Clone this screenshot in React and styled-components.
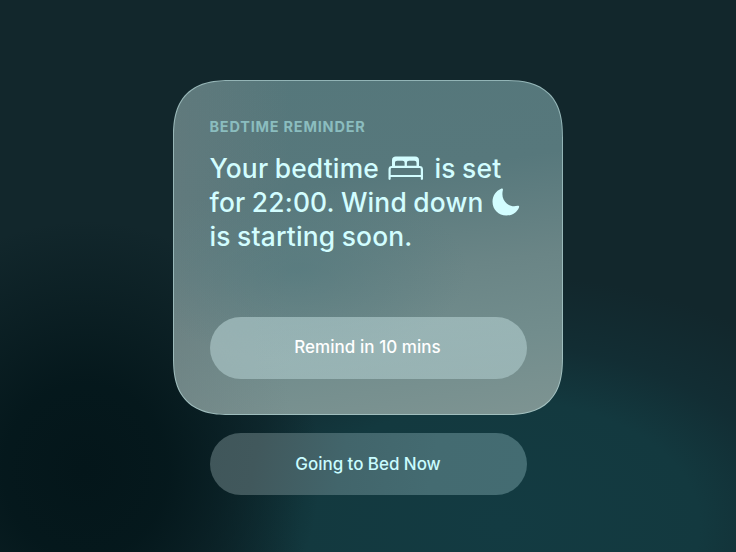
import React from "react";
import styled, { createGlobalStyle } from "styled-components";

const GlobalStyle = createGlobalStyle`
  *, *::before, *::after { box-sizing: border-box; }
  body { margin: 0; font-family: Inter, "Open Sans", sans-serif; -webkit-font-smoothing: antialiased; }
`;

const Scene = styled.main`
  width: 736px;
  height: 552px;
  overflow: hidden;
  display: flex;
  flex-direction: column;
  align-items: center;
  padding-top: 80px;
  gap: 18px;
  background:
    radial-gradient(ellipse 235px 250px at 85px 470px, #04161a 0%, rgba(4, 23, 27, 0.93) 35%, rgba(5, 24, 28, 0.45) 70%, rgba(6, 26, 30, 0) 100%),
    radial-gradient(ellipse 400px 250px at 500px 525px, #133b42 0%, #13393f 50%, rgba(18, 50, 57, 0.6) 72%, rgba(18, 40, 45, 0) 100%),
    #12272c;
`;

const Card = styled.section`
  width: 390px;
  height: 335px;
  display: flex;
  flex-direction: column;
  align-items: flex-start;
  padding: 37px 36px 35px 35.5px;
  border: 1px solid rgba(184, 218, 218, 0.62);
  border-radius: 54px;
  @supports (corner-shape: superellipse(1.38)) {
    border-radius: 58px;
    corner-shape: superellipse(1.38);
  }
  background:
    radial-gradient(ellipse 170px 90px at 125px 190px, rgba(82, 120, 125, 0.6), rgba(82, 120, 125, 0) 100%),
    linear-gradient(90deg, rgba(110, 125, 126, 0.45), rgba(110, 125, 126, 0) 30%),
    linear-gradient(172deg, #55777b 0%, #57787c 32%, #6a8586 58%, #728d8d 78%, #7e9492 100%);
  background-origin: border-box;
`;

const Eyebrow = styled.h2`
  margin: 0;
  font-size: 14.5px;
  line-height: 17px;
  font-weight: 700;
  letter-spacing: 0.77px;
  color: #8bbdbf;
`;

const Message = styled.p`
  margin: 16px 0 0;
  font-size: 26.4px;
  line-height: 34px;
  font-weight: 500;
  letter-spacing: 0.17px;
  word-spacing: -0.8px;
  color: #d2fdff;
  white-space: nowrap;
`;

const Line = styled.span`
  display: flex;
  align-items: center;
  height: 34px;
`;

const Icon = styled.svg`
  flex: none;
  display: block;
  margin: ${(p) => p.$margin};
`;

const Pill = styled.button`
  width: 317px;
  height: 62px;
  flex: none;
  border: 0;
  border-radius: 31px;
  padding: 0;
  font: 500 17px/22px Inter, "Open Sans", sans-serif;
  letter-spacing: ${(p) => p.$tracking};
  color: ${(p) => p.$color};
  background: ${(p) => p.$fill};
`;

const CardPill = styled(Pill)`
  margin-top: auto;
  padding: 0 1px 2px 0;
`;

function BedIcon() {
  return (
    <Icon width="36" height="25" viewBox="0 0 36 25" $margin="0 10px 0 9.5px" aria-label="bed">
      <path
        fill="#d2fdff"
        fillRule="evenodd"
        d="M4 10V4.2C4 1.8 5.4.5 7.8.5h19.4C29.6.5 31 1.8 31 4.2V10h.6c2.2 0 3.4 1.2 3.4 3.4v9.4c0 .7-.4 1.2-1.1 1.2s-1.1-.5-1.1-1.2V21H2.7v1.8c0 .7-.4 1.2-1.1 1.2S.5 23.5.5 22.8v-9.4C.5 11.2 1.7 10 3.9 10ZM7 9.7h9.6V6.9c0-1.5-.7-2.2-2.2-2.2H9.2C7.7 4.7 7 5.4 7 6.9ZM18.9 9.7h9.6V6.9c0-1.5-.7-2.2-2.2-2.2h-5.2c-1.5 0-2.2.7-2.2 2.2ZM4.2 12.1c-1.1 0-1.5.4-1.5 1.5v5.3h30.1v-5.3c0-1.1-.4-1.5-1.5-1.5Z"
      />
    </Icon>
  );
}

function MoonIcon() {
  return (
    <Icon width="28" height="28" viewBox="0 0 28 28" $margin="0 0 0 8.5px" aria-label="moon">
      <path
        fill="#d2fdff"
        d="M9.1.7C10.2.1 11.2.9 10.9 2.1 9.4 8.2 11.3 12.7 15 15.7c3.2 2.5 6.9 2.9 10.5 2 1.3-.3 2 .5 1.5 1.7C24.9 24.5 20 27.5 14.3 27.5 6.6 27.5.5 21.5.5 13.7.5 7.8 4 2.8 9.1.7Z"
      />
    </Icon>
  );
}

export default function App() {
  return (
    <>
      <GlobalStyle />
      <Scene>
        <Card>
          <Eyebrow>BEDTIME REMINDER</Eyebrow>
          <Message>
            <Line>Your bedtime<BedIcon />is set</Line>
            <Line>for 22:00. Wind down<MoonIcon /></Line>
            <Line>is starting soon.</Line>
          </Message>
          <CardPill
            $tracking="0.05px"
            $color="#fff"
            $fill="linear-gradient(175deg, rgba(197,224,225,0.5), rgba(188,217,219,0.48))"
          >
            Remind in 10 mins
          </CardPill>
        </Card>
        <Pill
          $tracking="-0.05px"
          $color="#c9fcff"
          $fill="linear-gradient(100deg, #40565a 0%, #41585c 15%, #42656b 42%, #446b71 70%, #446c72 100%)"
        >
          Going to Bed Now
        </Pill>
      </Scene>
    </>
  );
}
